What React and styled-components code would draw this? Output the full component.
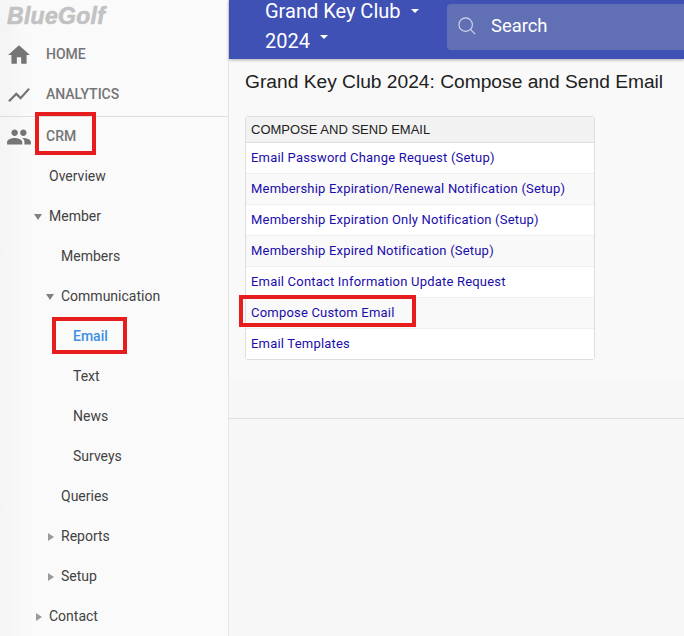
import React from "react";
import styled, {createGlobalStyle, css} from "styled-components";
import {MdHome, MdShowChart, MdPeople} from "react-icons/md";

const GlobalStyle = createGlobalStyle`
    html, body {
        margin: 0;
        padding: 0;
        height: 100%;
        overflow: hidden;
        background-color: #f7f7f7;
        font-family: Roboto, "Liberation Sans", sans-serif;
    }
`

const links = [
    {label: "Email Password Change Request", setup: true},
    {label: "Membership Expiration/Renewal Notification", setup: true},
    {label: "Membership Expiration Only Notification", setup: true},
    {label: "Membership Expired Notification", setup: true},
    {label: "Email Contact Information Update Request"},
    {label: "Compose Custom Email", marked: true},
    {label: "Email Templates"},
];

const menu = [
    {label: "Overview", depth: 0},
    {label: "Member", depth: 0, arrow: "down"},
    {label: "Members", depth: 1},
    {label: "Communication", depth: 1, arrow: "down"},
    {label: "Email", depth: 2, active: true},
    {label: "Text", depth: 2},
    {label: "News", depth: 2},
    {label: "Surveys", depth: 2},
    {label: "Queries", depth: 1},
    {label: "Reports", depth: 1, arrow: "right"},
    {label: "Setup", depth: 1, arrow: "right"},
    {label: "Contact", depth: 0, arrow: "right"},
];

export default function App() {
    return <Page>
        <GlobalStyle/>
        <Sidebar>
            <Logo>BlueGolf</Logo>
            <TopItem><TopIcon><MdHome size={26}/></TopIcon><TopLabel>HOME</TopLabel></TopItem>
            <TopItem><TopIcon><MdShowChart size={26}/></TopIcon><TopLabel>ANALYTICS</TopLabel></TopItem>
            <Divider/>
            <TopItem>
                <TopIcon><MdPeople size={26}/></TopIcon>
                <TopLabel>CRM<CrmMark/></TopLabel>
            </TopItem>
            {menu.map(item => <MenuRow key={item.label} depth={item.depth}>
                {item.arrow === "down" && <ArrowDown/>}
                {item.arrow === "right" && <ArrowRight/>}
                <MenuLabel active={item.active}>{item.label}{item.active && <EmailMark/>}</MenuLabel>
            </MenuRow>)}
        </Sidebar>
        <Content>
            <Header>
                <ClubName>
                    <ClubLine>Grand Key Club <Caret/></ClubLine>
                    <ClubLine>2024 <Caret raised/></ClubLine>
                </ClubName>
                <SearchBox>
                    <svg width="18" height="18" viewBox="0 0 20 20" fill="none" stroke="#d5d9ee" strokeWidth="1.2">
                        <circle cx="8.5" cy="8.5" r="7.5"/>
                        <path d="M13.8 13.8 L19 19"/>
                    </svg>
                    <SearchText>Search</SearchText>
                </SearchBox>
            </Header>
            <Main>
                <Title>Grand Key Club 2024: Compose and Send Email</Title>
                <Card>
                    <CardHead>COMPOSE AND SEND EMAIL</CardHead>
                    {links.map((link, i) => <CardRow key={link.label} striped={i % 2 === 1}>
                        <CardLink>{link.label}{link.marked && <LinkMark/>}</CardLink>
                        {link.setup && <> (<CardLink>Setup</CardLink>)</>}
                    </CardRow>)}
                </Card>
            </Main>
            <FooterLine/>
        </Content>
    </Page>
}

const Page = styled.div`
    display: flex;
    width: 684px;
    height: 636px;
    overflow: hidden;
`

const Sidebar = styled.nav`
    flex: 0 0 229px;
    height: 636px;
    background: linear-gradient(to right, #f4f4f4, #fafafa 30px);
    border-right: 1px solid #e4e4e4;
    box-sizing: border-box;
`

const Logo = styled.div`
    height: 34px;
    padding: 0 0 0 7px;
    font-family: "Liberation Sans", sans-serif;
    font-size: 23px;
    font-weight: 700;
    font-style: italic;
    line-height: 32px;
    letter-spacing: 0.3px;
    color: #c2c2c2;
    -webkit-text-stroke: 0.6px #c2c2c2;
`

const TopItem = styled.div`
    display: flex;
    align-items: center;
    height: 40px;
`

const TopIcon = styled.div`
    display: flex;
    justify-content: center;
    width: 38px;
    margin-top: 2px;
    margin-right: 8px;
    color: #757575;
`

const TopLabel = styled.span`
    position: relative;
    font-size: 14px;
    font-weight: 500;
    color: #757575;
`

const Divider = styled.div`
    height: 1px;
    margin-top: 2px;
    margin-bottom: -1px;
    background-color: #dedede;
`

const markStyle = css`
    position: absolute;
    border: 4px solid #e71c1c;
    box-sizing: border-box;
    pointer-events: none;
`

const CrmMark = styled.i`
    ${markStyle};
    left: -11px;
    top: -16px;
    width: 61px;
    height: 43px;
`

const EmailMark = styled.i`
    ${markStyle};
    left: -21px;
    top: -11px;
    width: 75px;
    height: 37px;
`

const LinkMark = styled.i`
    ${markStyle};
    left: -12px;
    top: -10px;
    width: 177px;
    height: 32px;
`

const MenuRow = styled.div`
    position: relative;
    display: flex;
    align-items: center;
    height: 40px;
    padding-left: ${props => 49 + props.depth * 12}px;
`

const MenuLabel = styled.span`
    position: relative;
    font-size: 14px;
    font-weight: ${props => props.active ? 500 : 400};
    color: ${props => props.active ? "#3d8fe0" : "#424242"};
`

const ArrowDown = styled.span`
    position: absolute;
    margin-left: -15px;
    margin-top: 2px;
    border-left: 4px solid transparent;
    border-right: 4px solid transparent;
    border-top: 6px solid #808080;
`

const ArrowRight = styled.span`
    position: absolute;
    margin-left: -13px;
    margin-top: 2px;
    border-top: 4px solid transparent;
    border-bottom: 4px solid transparent;
    border-left: 6px solid #9a9a9a;
`

const Content = styled.div`
    flex: 1;
    min-width: 0;
`

const Header = styled.header`
    display: flex;
    height: 59px;
    background-color: #3f51b5;
    box-shadow: 0 1px 3px rgba(0, 0, 0, 0.3);
    position: relative;
`

const ClubName = styled.div`
    padding: 0 0 0 36px;
    margin-top: -4px;
    box-sizing: border-box;
    flex: 0 0 218px;
`

const ClubLine = styled.div`
    display: flex;
    align-items: center;
    gap: 5px;
    height: 30px;
    font-size: 20px;
    color: #fff;
`

const Caret = styled.span`
    margin-left: 5px;
    margin-bottom: ${props => props.raised ? 8 : 0}px;
    border-left: 4px solid transparent;
    border-right: 4px solid transparent;
    border-top: 4px solid #fff;
`

const SearchBox = styled.div`
    display: flex;
    align-items: center;
    flex: 1;
    height: 46px;
    margin-top: 4px;
    padding: 0 0 3px 11px;
    box-sizing: border-box;
    background-color: #6170b5;
    border-radius: 4px 0 0 4px;
`

const SearchText = styled.span`
    margin-left: 15px;
    font-size: 18.4px;
    color: #fff;
`

const Main = styled.main`
    height: 322px;
    padding: 11px 16px 0;
    background-color: #f9f9f9;
    box-sizing: border-box;
`

const Title = styled.h1`
    margin: 0 0 22px;
    font-family: "Liberation Sans", sans-serif;
    font-size: 19.2px;
    font-weight: 400;
    line-height: 24px;
    white-space: nowrap;
    color: #212121;
`

const Card = styled.div`
    width: 350px;
    box-sizing: border-box;
    border: 1px solid #dedede;
    border-radius: 3px;
    background-color: #fff;
`

const CardHead = styled.div`
    height: 26px;
    box-sizing: border-box;
    padding-left: 5px;
    font-family: "Liberation Sans", sans-serif;
    font-size: 13px;
    line-height: 25px;
    color: #212121;
    background-color: #f2f2f2;
    border-bottom: 1px solid #dedede;
`

const CardRow = styled.div`
    height: 30px;
    padding-left: 5px;
    font-size: 13px;
    letter-spacing: 0.2px;
    line-height: 30px;
    color: #221199;
    background-color: ${props => props.striped ? "#f9f9f9" : "#fff"};
    border-bottom: 1px solid #efefef;
    &:last-child { border-bottom: 0; }
`

const CardLink = styled.a`
    position: relative;
    color: #1a0dab;
`

const FooterLine = styled.div`
    height: 1px;
    margin-top: 37px;
    background-color: #dedede;
`
